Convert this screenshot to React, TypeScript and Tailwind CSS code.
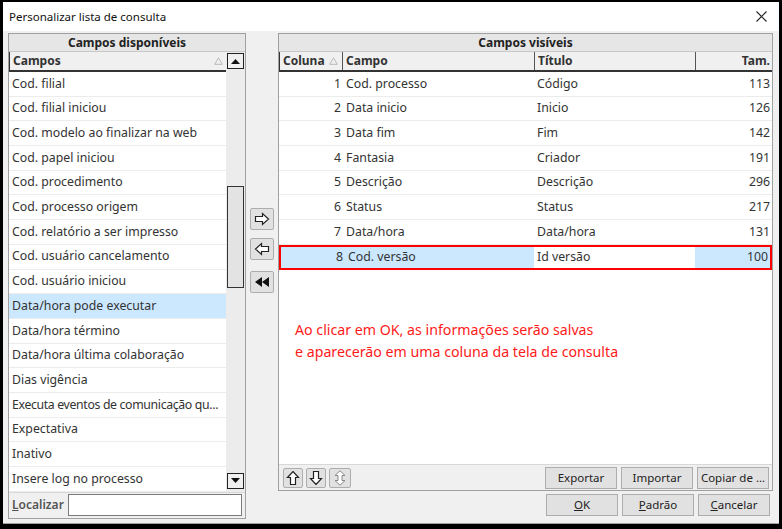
import React from "react";

const disponiveis = [
  "Cod. filial",
  "Cod. filial iniciou",
  "Cod. modelo ao finalizar na web",
  "Cod. papel iniciou",
  "Cod. procedimento",
  "Cod. processo origem",
  "Cod. relatório a ser impresso",
  "Cod. usuário cancelamento",
  "Cod. usuário iniciou",
  "Data/hora pode executar",
  "Data/hora término",
  "Data/hora última colaboração",
  "Dias vigência",
  "Executa eventos de comunicação qu...",
  "Expectativa",
  "Inativo",
  "Insere log no processo",
];

const visiveis = [
  { n: 1, campo: "Cod. processo", titulo: "Código", tam: 113 },
  { n: 2, campo: "Data inicio", titulo: "Inicio", tam: 126 },
  { n: 3, campo: "Data fim", titulo: "Fim", tam: 142 },
  { n: 4, campo: "Fantasia", titulo: "Criador", tam: 191 },
  { n: 5, campo: "Descrição", titulo: "Descrição", tam: 296 },
  { n: 6, campo: "Status", titulo: "Status", tam: 217 },
  { n: 7, campo: "Data/hora", titulo: "Data/hora", tam: 131 },
  { n: 8, campo: "Cod. versão", titulo: "Id versão", tam: 100 },
];

function SortMark() {
  return (
    <svg width="9" height="8" viewBox="0 0 9 8" className="shrink-0">
      <path d="M4.5 0.8 L8.3 7.3 L0.7 7.3 Z" fill="none" stroke="#b8b8b8" strokeWidth="1" />
    </svg>
  );
}

function Arrow({ dir }: { dir: "right" | "left" | "up" | "down" }) {
  const rot = { right: 0, left: 180, up: 270, down: 90 }[dir];
  return (
    <svg width="16" height="14" viewBox="0 0 16 14">
      <g transform={`rotate(${rot} 8 7)`}>
        <path d="M1.5 4.5 H8.5 V1.5 L14.5 7 L8.5 12.5 V9.5 H1.5 Z" fill="#ffffff" stroke="#222" strokeWidth="1.2" strokeLinejoin="miter" />
      </g>
    </svg>
  );
}

function BtnSmall({ children, className = "" }: { children: React.ReactNode; className?: string }) {
  return (
    <div className={"flex items-center justify-center rounded-[2px] border border-[#adadad] bg-[#e1e1e1] " + className}>
      {children}
    </div>
  );
}

function Btn({ children }: { children: React.ReactNode }) {
  return (
    <div className="flex h-[22px] w-[72px] items-center justify-center border border-[#adadad] bg-[#e1e1e1] text-[11.5px] text-[#222]">
      {children}
    </div>
  );
}

export default function App() {
  return (
    <div
      className="flex h-[529px] w-[782px] flex-col border-x-[3px] border-t-[2px] border-b-[5px] border-black bg-[#f0f0f0] text-[#333]"
      style={{ fontFamily: '"Noto Sans", "DejaVu Sans", sans-serif' }}
    >
      {/* title */}
      <div className="flex h-[29px] shrink-0 items-center justify-between bg-white pl-[6px] pr-[12px]">
        <span className="text-[11.5px] text-[#111]">Personalizar lista de consulta</span>
        <svg width="11" height="11" viewBox="0 0 11 11">
          <path d="M0.5 0.5 L10.5 10.5 M10.5 0.5 L0.5 10.5" stroke="#222" strokeWidth="1.1" />
        </svg>
      </div>

      <div className="flex flex-1 flex-col border-b border-[#a0a0a0] pb-[3px]">
        <div className="flex flex-1 items-start pl-[5px] pr-[6px] pt-[2px]">
          {/* left panel */}
          <div className="flex w-[238px] shrink-0 flex-col border border-[#a0a0a0]">
            <div className="flex h-[18px] items-center justify-center border-b border-[#c8c8c8] bg-[#e6e6e6] text-[12px] font-bold text-[#222]">
              Campos disponíveis
            </div>
            <div className="flex">
              <div className="flex min-w-0 flex-1 flex-col bg-white">
                <div className="flex h-[20px] items-center justify-between border-b-2 border-l border-[#333] bg-[#f0f0f0] pl-[3px] pr-[3px] text-[12px] font-bold text-[#333]">
                  <span>Campos</span>
                  <SortMark />
                </div>
                {disponiveis.map((c) => (
                  <div
                    key={c}
                    className={
                      "flex h-[24.7px] items-center overflow-hidden whitespace-nowrap border-b border-[#ececec] pl-[3px] text-[12.3px] " +
                      (c === "Data/hora pode executar" ? "bg-[#cce8ff] " : "bg-white ") +
                      (c.endsWith("...") ? "tracking-[-0.35px]" : "")
                    }
                  >
                    {c}
                  </div>
                ))}
              </div>
              {/* scrollbar */}
              <div className="flex w-[19px] shrink-0 flex-col items-center bg-[#ececec] pt-[1px]">
                <div className="flex h-[16px] w-[17px] items-center justify-center border border-[#222] bg-[#f0f0f0]">
                  <svg width="9" height="5" viewBox="0 0 9 5"><path d="M4.5 0 L9 5 L0 5 Z" fill="#111" /></svg>
                </div>
                <div className="h-[117px]" />
                <div className="h-[102px] w-[17px] border border-[#333] bg-[#e3e3e3]" />
                <div className="flex-1" />
                <div className="mb-[3px] flex h-[16px] w-[17px] items-center justify-center border border-[#222] bg-[#f0f0f0]">
                  <svg width="9" height="5" viewBox="0 0 9 5"><path d="M0 0 L9 0 L4.5 5 Z" fill="#111" /></svg>
                </div>
              </div>
            </div>
            <div className="flex h-[26px] items-center gap-[4px] border-t border-[#d8d8d8] pl-[3px] pr-[3px]">
              <span className="text-[12px] font-semibold text-[#555]">
                <span className="underline">L</span>ocalizar
              </span>
              <div className="h-[22px] flex-1 border border-[#7a7a7a] bg-white" />
            </div>
          </div>

          {/* middle buttons */}
          <div className="flex w-[32px] shrink-0 flex-col items-center pt-[175px]">
            <BtnSmall className="h-[22px] w-[24px]"><Arrow dir="right" /></BtnSmall>
            <BtnSmall className="mt-[8px] h-[22px] w-[24px]"><Arrow dir="left" /></BtnSmall>
            <BtnSmall className="mt-[11px] h-[22px] w-[24px]">
              <svg width="14" height="10" viewBox="0 0 14 10"><path d="M0 5 L7 0 V10 Z M7 5 L14 0 V10 Z" fill="#111" /></svg>
            </BtnSmall>
          </div>

          {/* right column */}
          <div className="flex min-w-0 flex-1 flex-col">
            <div className="flex h-[458px] flex-col border border-[#a0a0a0]">
              <div className="flex h-[18px] items-center justify-center border-b border-[#c8c8c8] bg-[#e6e6e6] text-[12px] font-bold text-[#222]">
                Campos visíveis
              </div>
              <div className="flex flex-1 flex-col bg-white">
                <div className="flex h-[20px] border-b-2 border-l border-[#333] bg-[#f0f0f0] text-[12px] font-bold text-[#333]">
                  <div className="flex w-[63px] items-center justify-between border-r border-[#555] pl-[3px] pr-[4px]">
                    <span>Coluna</span>
                    <SortMark />
                  </div>
                  <div className="flex w-[192px] items-center border-r border-[#555] pl-[3px]">Campo</div>
                  <div className="flex w-[161px] items-center border-r border-[#555] pl-[3px]">Título</div>
                  <div className="flex flex-1 items-center justify-end pr-[2px]">Tam.</div>
                </div>
                {visiveis.map((r) => {
                  const sel = r.n === 8;
                  return (
                    <div
                      key={r.n}
                      className={
                        "flex h-[24.7px] items-stretch text-[12.3px] " +
                        (sel ? "border-2 border-[#ff0000]" : "border-b border-[#ececec]")
                      }
                    >
                      <div className={"flex items-center " + (sel ? "w-[253px] bg-[#cce8ff]" : "w-[255px]")}>
                        <span className="w-[63px] pr-[1px] text-right">{r.n}</span>
                        <span className="pl-[4px]">{r.campo}</span>
                      </div>
                      <div className="flex w-[161px] items-center bg-white pl-[3px]">{r.titulo}</div>
                      <div className={"flex flex-1 items-center justify-end pr-[2px] " + (sel ? "bg-[#cce8ff]" : "")}>{r.tam}</div>
                    </div>
                  );
                })}
                <div className="flex flex-1 flex-col pl-[16px] pt-[49px] text-[14.2px] leading-[22px] text-[#ff1a1a]">
                  <span>Ao clicar em OK, as informações serão salvas</span>
                  <span>e aparecerão em uma coluna da tela de consulta</span>
                </div>
              </div>
              <div className="flex h-[26px] items-center border-t border-[#d8d8d8] pl-[4px] pr-[3px]">
                <BtnSmall className="h-[20px] w-[20px]"><Arrow dir="up" /></BtnSmall>
                <BtnSmall className="ml-[3px] h-[20px] w-[20px]"><Arrow dir="down" /></BtnSmall>
                <BtnSmall className="ml-[3px] h-[20px] w-[22px]">
                  <svg width="12" height="16" viewBox="0 0 12 16">
                    <path d="M6 0.8 L11 5.5 H8 V10.5 H11 L6 15.2 L1 10.5 H4 V5.5 H1 Z" fill="#fff" stroke="#888" strokeWidth="1" />
                  </svg>
                </BtnSmall>
                <div className="flex-1" />
                <div className="flex gap-[4px]">
                  <Btn>Exportar</Btn>
                  <Btn>Importar</Btn>
                  <Btn>Copiar de ...</Btn>
                </div>
              </div>
            </div>
            <div className="mt-[3px] flex justify-end gap-[4px] pr-[3px]">
              <Btn><span className="underline">O</span>K</Btn>
              <Btn><span className="underline">P</span>adrão</Btn>
              <Btn><span className="underline">C</span>ancelar</Btn>
            </div>
          </div>
        </div>
      </div>
    </div>
  );
}
